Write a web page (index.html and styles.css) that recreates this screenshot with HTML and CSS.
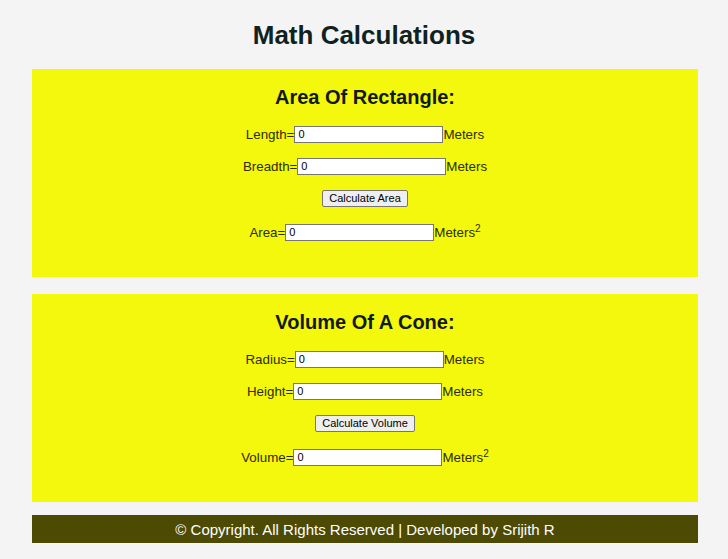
FILE: index.html
```html
<!DOCTYPE html>
<html>
<head>
<meta charset="utf-8">
<title>Math Calculations</title>
<link rel="stylesheet" href="styles.css">
</head>
<body>
<h1 class="title">Math Calculations</h1>
<main class="panels">
  <section class="panel">
    <h2 class="panel-title">Area Of Rectangle:</h2>
    <div class="row"><span>Length=</span><input class="field" type="text" value="0"><span>Meters</span></div>
    <div class="row"><span>Breadth=</span><input class="field" type="text" value="0"><span>Meters</span></div>
    <div class="row"><button class="btn">Calculate Area</button></div>
    <div class="row row-result"><span>Area=</span><input class="field" type="text" value="0"><span>Meters<sup>2</sup></span></div>
  </section>
  <section class="panel">
    <h2 class="panel-title">Volume Of A Cone:</h2>
    <div class="row"><span>Radius=</span><input class="field" type="text" value="0"><span>Meters</span></div>
    <div class="row"><span>Height=</span><input class="field" type="text" value="0"><span>Meters</span></div>
    <div class="row"><button class="btn">Calculate Volume</button></div>
    <div class="row row-result"><span>Volume=</span><input class="field" type="text" value="0"><span>Meters<sup>2</sup></span></div>
  </section>
</main>
<footer class="footer">© Copyright. All Rights Reserved | Developed by Srijith R</footer>
</body>
</html>
```
FILE: styles.css
```css
* { box-sizing: border-box; }
body {
  margin: 0;
  padding: 20px 0 0;
  background: #f4f4f4;
  font-family: "Liberation Sans", Arial, sans-serif;
}
.title {
  margin: 0 0 19px;
  font-size: 26px;
  line-height: 30px;
  text-align: center;
  color: #0f2222;
}
.panels {
  display: flex;
  flex-direction: column;
  gap: 17px;
  width: 666px;
  margin: 0 30px 0 32px;
}
.panel {
  background: #f4f80c;
  height: 208px;
  padding: 16px 0 0;
  display: flex;
  flex-direction: column;
  gap: 12px;
}
.panel-title {
  margin: 0 0 3px;
  font-size: 20px;
  line-height: 24px;
  text-align: center;
  color: #111a10;
}
.row {
  height: 20px;
  display: flex;
  align-items: center;
  justify-content: center;
  font-size: 13.33px;
  color: #2e2c00;
}
.row-result { margin-top: 2px; }
.row sup {
  font-size: 10px;
  vertical-align: 5px;
  line-height: 0;
}
.field {
  width: 149px;
  height: 17px;
  margin: 0;
  padding: 0 3px;
  border: 1px solid #767676;
  background: #fff;
  font-family: "Liberation Sans", Arial, sans-serif;
  font-size: 11px;
  color: #000;
}
.btn {
  height: 17px;
  padding: 0 6px;
  margin: 0;
  border: 1px solid #767676;
  border-radius: 2px;
  background: #efefef;
  font-family: "Liberation Sans", Arial, sans-serif;
  font-size: 11px;
  color: #000;
}
.footer {
  width: 666px;
  height: 28px;
  margin: 13px 30px 0 32px;
  background: #4d4a03;
  color: #fff;
  font-size: 15px;
  display: flex;
  align-items: center;
  justify-content: center;
}
```
